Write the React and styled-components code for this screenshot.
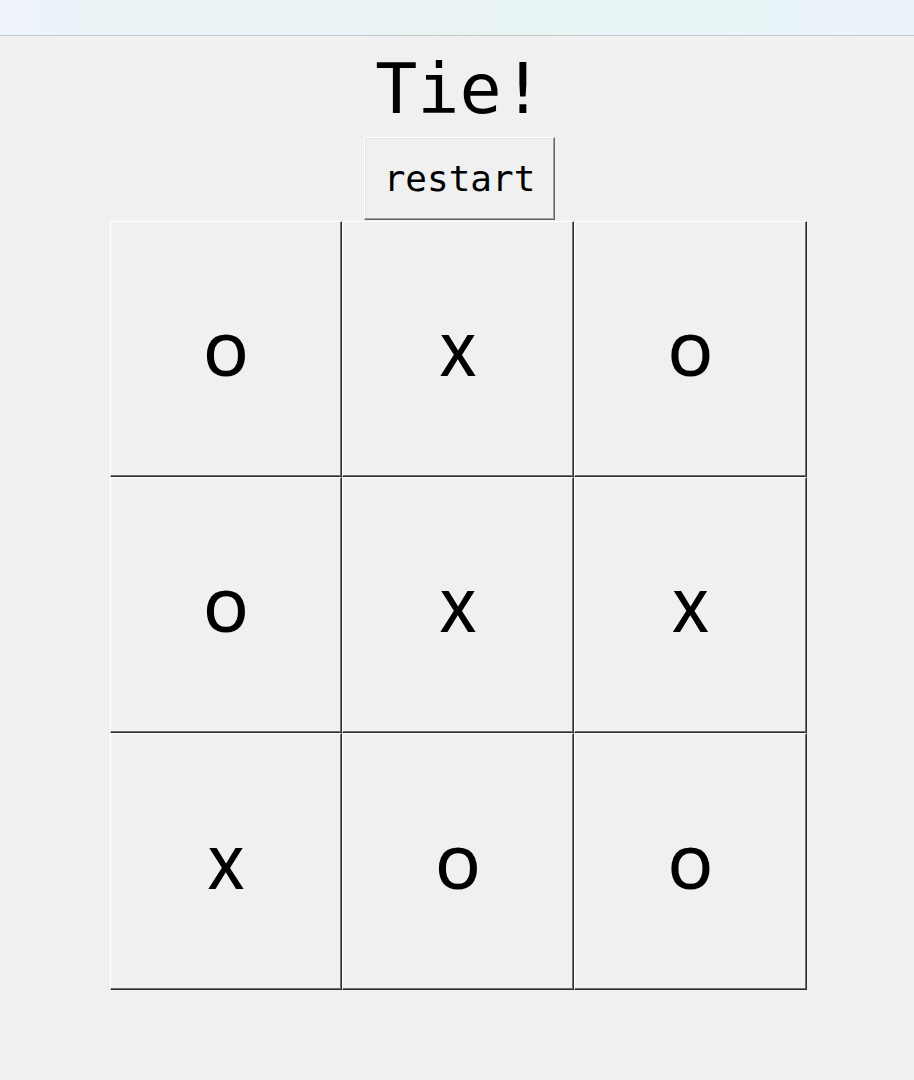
import React from "react";
import styled, { createGlobalStyle } from "styled-components";

const Global = createGlobalStyle`
  html, body { margin: 0; padding: 0; background: #f0f0f0; }
  body { font-family: "DejaVu Sans", sans-serif; }
`;

const Page = styled.div`
  min-height: 1080px;
  display: flex;
  flex-direction: column;
  align-items: center;
  background: #f0f0f0;
`;

const TopBar = styled.div`
  align-self: stretch;
  height: 35px;
  background: linear-gradient(90deg, #edf3f8 0%, #e9f3f4 50%, #e8f5f6 75%, #ebf3fa 100%);
  border-bottom: 1px solid #c6c9ca;
`;

const Title = styled.h1`
  margin: 12px 0 0 5px;
  font-family: "DejaVu Sans Mono", monospace;
  font-size: 70px;
  font-weight: normal;
  line-height: normal;
  color: #000;
`;

const RestartButton = styled.button`
  margin: 7px 0 0 5px;
  box-sizing: border-box;
  width: 191px;
  height: 83px;
  padding: 0;
  font-family: "DejaVu Sans Mono", monospace;
  font-size: 36px;
  color: #000;
  background: #f0f0f0;
  border: 1px solid;
  border-color: #ffffff #646464 #646464 #ffffff;
  box-shadow: inset -1px -1px 0 #a0a0a0, inset 1px 1px 0 #e3e3e3;
  display: flex;
  align-items: center;
  justify-content: center;
  cursor: pointer;
`;

const Board = styled.div`
  margin-top: 1px;
  margin-left: 3px;
  display: grid;
  grid-template-columns: 232px 232px 233px;
  grid-template-rows: 256px 256px 257px;
`;

const Cell = styled.button`
  box-sizing: border-box;
  padding: 10px 0 0;
  margin: 0;
  font-family: "Open Sans", "DejaVu Sans", sans-serif;
  font-size: 57px;
  font-weight: 600;
  color: #000;
  background: #f0f0f0;
  border: 1px solid;
  border-color: #ffffff #2e2e2e #2e2e2e #ffffff;
  box-shadow: inset -1px -1px 0 #707070, inset 1px 1px 0 #f0f0f0;
  display: flex;
  align-items: center;
  justify-content: center;
  cursor: pointer;
`;

const cells = ["O", "X", "O", "O", "X", "X", "X", "O", "O"];

export default function App() {
  return (
    <>
      <Global />
      <Page>
        <TopBar />
        <Title>Tie!</Title>
        <RestartButton>restart</RestartButton>
        <Board>
          {cells.map((c, i) => (
            <Cell key={i}>{c}</Cell>
          ))}
        </Board>
      </Page>
    </>
  );
}
